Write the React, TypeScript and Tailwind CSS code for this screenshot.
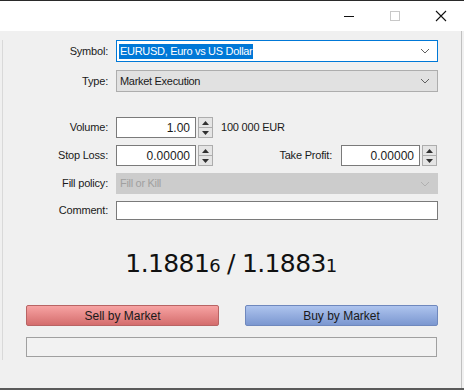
import React from "react";

const font = { fontFamily: '"Liberation Sans", Arial, sans-serif' };

function Chevron({ color = "#606060" }: { color?: string }) {
  return (
    <svg width="10" height="6" viewBox="0 0 10 6">
      <path d="M1 1 L5 5 L9 1" fill="none" stroke={color} strokeWidth="1" />
    </svg>
  );
}

function Spinner() {
  return (
    <div className="flex flex-col w-[15px] h-[21px] border border-[#adadad] bg-[#e5e5e5]">
      <div className="flex-1 flex items-center justify-center border-b border-[#adadad]">
        <svg width="7" height="4" viewBox="0 0 7 4">
          <path d="M0 4 L3.5 0 L7 4 Z" fill="#303030" />
        </svg>
      </div>
      <div className="flex-1 flex items-center justify-center">
        <svg width="7" height="4" viewBox="0 0 7 4">
          <path d="M0 0 L3.5 4 L7 0 Z" fill="#303030" />
        </svg>
      </div>
    </div>
  );
}

function Label({ children }: { children: React.ReactNode }) {
  return <div className="w-[105px] shrink-0 text-right text-[11px] tracking-[-0.2px] text-[#1a1a1a]">{children}</div>;
}

function NumberInput({ value }: { value: string }) {
  return (
    <div className="flex items-center gap-[2px]">
      <div className="w-[80px] h-[21px] border border-[#7a7a7a] bg-white flex items-center justify-end pr-[5px] text-[12px] text-[#1a1a1a]">
        {value}
      </div>
      <Spinner />
    </div>
  );
}

export default function App() {
  return (
    <div style={font} className="w-[464px] h-[390px] flex flex-col bg-[#f0f0f0] overflow-hidden">
      {/* title bar */}
      <div className="h-[31px] bg-white border-t border-[#2a2a2a] flex items-center justify-end shrink-0">
        <div className="w-[46px] h-full flex items-center justify-center">
          <div className="w-[10px] h-[1px] bg-[#111]" />
        </div>
        <div className="w-[46px] h-full flex items-center justify-center">
          <div className="w-[10px] h-[10px] border border-[#c8c8c8]" />
        </div>
        <div className="w-[46px] h-full flex items-center justify-center">
          <svg width="12" height="12" viewBox="0 0 12 12">
            <path d="M1 1 L11 11 M11 1 L1 11" stroke="#111" strokeWidth="1.1" />
          </svg>
        </div>
      </div>

      {/* body */}
      <div className="flex-1 flex border-b-2 border-[#5a5a5a]">
        <div className="w-[3px] shrink-0 flex flex-col pt-[9px] pb-[28px]">
          <div className="flex-1 border-r border-[#d9d9d9]" />
        </div>
        <div className="flex-1 flex flex-col pt-[9px]">
          {/* Symbol */}
          <div className="flex items-center gap-[8px] h-[22px]">
            <Label>Symbol:</Label>
            <div className="w-[322px] h-[22px] border border-[#0078d7] bg-white flex items-center pl-[2px] pr-[7px]">
              <span className="bg-[#0078d7] text-white text-[11px] tracking-[-0.3px] leading-[15px] px-[1px]">EURUSD, Euro vs US Dollar</span>
              <div className="flex-1" />
              <Chevron />
            </div>
          </div>

          {/* Type */}
          <div className="flex items-center gap-[8px] h-[22px] mt-[8px]">
            <Label>Type:</Label>
            <div className="w-[322px] h-[22px] border border-[#adadad] bg-[#e1e1e1] flex items-center pl-[3px] pr-[7px]">
              <span className="text-[11px] tracking-[-0.3px] text-[#1a1a1a]">Market Execution</span>
              <div className="flex-1" />
              <Chevron />
            </div>
          </div>

          {/* Volume */}
          <div className="flex items-center gap-[8px] h-[21px] mt-[25px]">
            <Label>Volume:</Label>
            <NumberInput value="1.00" />
            <span className="ml-[0px] text-[11px] tracking-[-0.2px] text-[#1a1a1a]">100 000 EUR</span>
          </div>

          {/* Stop Loss / Take Profit */}
          <div className="flex items-center gap-[8px] h-[21px] mt-[7px]">
            <Label>Stop Loss:</Label>
            <NumberInput value="0.00000" />
            <div className="flex-1 text-right text-[11px] tracking-[-0.2px] text-[#1a1a1a] pr-[1px]">Take Profit:</div>
            <div className="w-[97px] mr-[23px] flex items-center gap-[2px]">
              <div className="w-[79px] h-[21px] border border-[#7a7a7a] bg-white flex items-center justify-end pr-[5px] text-[12px] text-[#1a1a1a]">
                0.00000
              </div>
              <Spinner />
            </div>
          </div>

          {/* Fill policy */}
          <div className="flex items-center gap-[8px] h-[21px] mt-[7px]">
            <Label>Fill policy:</Label>
            <div className="w-[322px] h-[21px] border border-[#cccccc] bg-[#cccccc] flex items-center pl-[3px] pr-[7px]">
              <span className="text-[11px] tracking-[-0.3px] text-[#a0a0a0]">Fill or Kill</span>
              <div className="flex-1" />
              <Chevron color="#b0b0b0" />
            </div>
          </div>

          {/* Comment */}
          <div className="flex items-center gap-[8px] h-[19px] mt-[7px]">
            <Label>Comment:</Label>
            <div className="w-[322px] h-[19px] border border-[#7a7a7a] bg-white" />
          </div>

          {/* Price */}
          <div className="flex justify-center items-baseline mt-[25px] h-[34px] pr-[2px] text-[25px] text-[#111]" style={{ fontFamily: '"DejaVu Sans", sans-serif', letterSpacing: "-0.6px" }}>
            <span>1.1881</span>
            <span className="text-[18px]">6</span>
            <span className="mx-[7px]">/</span>
            <span>1.1883</span>
            <span className="text-[18px]">1</span>
          </div>

          {/* Buttons */}
          <div className="flex gap-[26px] mt-[26px] pl-[23px]">
            <button className="w-[193px] h-[21px] rounded-[2px] border border-[#b86464] bg-gradient-to-b from-[#f7a3a3] to-[#d46d6d] text-[12px] text-[#1a1a1a]">
              Sell by Market
            </button>
            <button className="w-[193px] h-[21px] rounded-[2px] border border-[#6f88bd] bg-gradient-to-b from-[#aec4ee] to-[#7b97d0] text-[12px] text-[#1a1a1a]">
              Buy by Market
            </button>
          </div>

          {/* Progress */}
          <div className="ml-[23px] mt-[11px] w-[411px] h-[20px] border border-[#a0a0a0] bg-[#f2f2f2]" />
        </div>
        <div className="w-[3px] shrink-0 border-l border-[#c0c0c0]" />
      </div>
    </div>
  );
}
